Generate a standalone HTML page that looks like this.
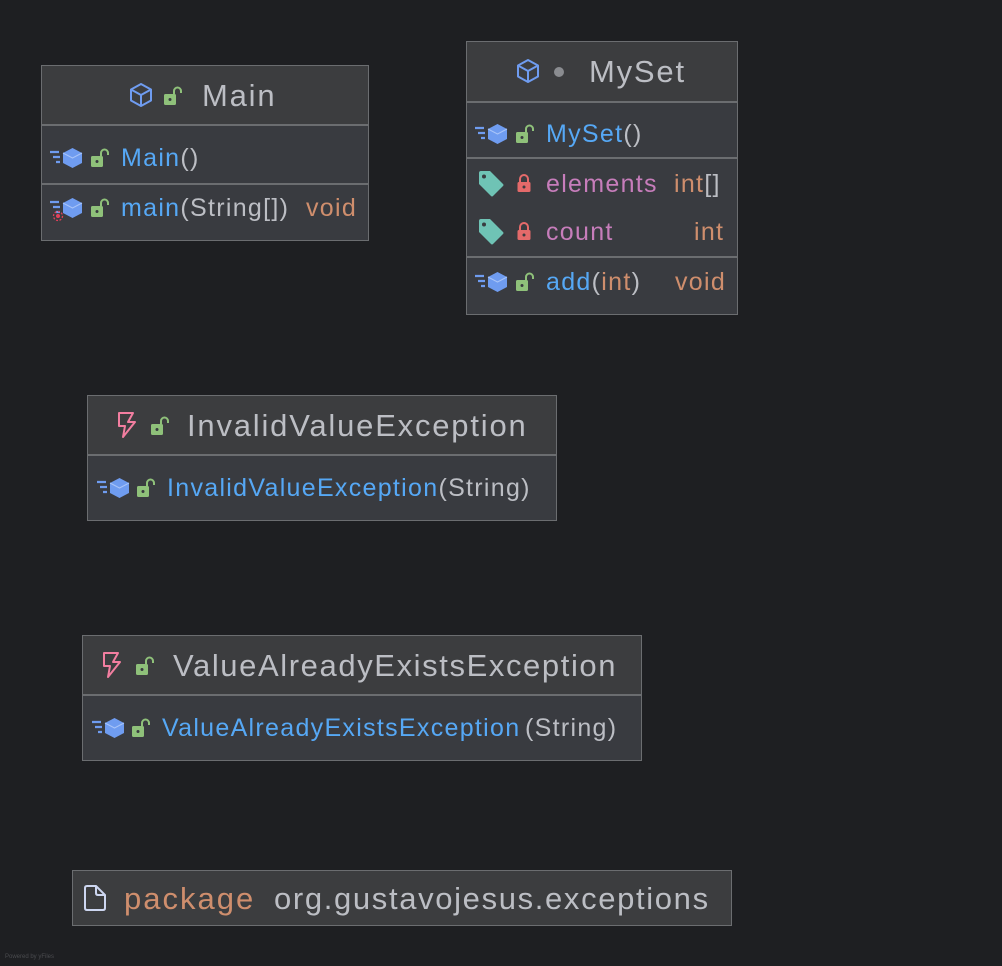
<!DOCTYPE html>
<html><head><meta charset="utf-8">
<style>
body{margin:0;background:#1e1f22;width:1002px;height:966px;overflow:hidden;position:relative;font-family:"Liberation Sans",sans-serif}
.box{position:absolute;border:1px solid #6b6d70;background:#393b40;box-sizing:border-box}
.hd{position:absolute;left:0;right:0;top:0;background:#3c3d3f;border-bottom:2px solid #6b6d70;box-sizing:border-box}
.sep{position:absolute;left:0;right:0;height:2px;background:#6b6d70}
.t{position:absolute;white-space:nowrap;line-height:30px;height:30px}
.h{font-size:31px;color:#bcbec4;letter-spacing:1.8px}
.r{font-size:25px;color:#bcbec4;letter-spacing:1.3px}
.m{color:#56a8f5}.o{color:#cf8e6d}.f{color:#c77dbb}
svg.i{position:absolute}
</style></head><body>
<svg width="0" height="0" style="position:absolute">
<defs>
<symbol id="cube" viewBox="0 0 26 26"><path d="M13 2 L23 7.5 V18.5 L13 24 L3 18.5 V7.5 Z M3 7.5 L13 13 L23 7.5 M13 13 V24" fill="none" stroke="#6f9cf0" stroke-width="2" stroke-linejoin="round"/></symbol>
<symbol id="lo" viewBox="0 0 20 20"><path d="M11 8 V5 A3.5 3.5 0 0 1 18 5 V7" fill="none" stroke="#8fc17a" stroke-width="2"/><rect x="1" y="8" width="12" height="11" rx="1.5" fill="#8fc17a"/><circle cx="7" cy="13.5" r="1.5" fill="#393b40"/></symbol>
<symbol id="lc" viewBox="0 0 20 20"><path d="M6 9 V6 A4 4 0 0 1 14 6 V9" fill="none" stroke="#e46a6a" stroke-width="2"/><rect x="3.5" y="9" width="13" height="10" rx="1.5" fill="#e46a6a"/><circle cx="10" cy="14" r="1.5" fill="#393b40"/></symbol>
<symbol id="mt" viewBox="0 0 34 22"><path d="M0 5 H9 M3 10 H10 M6 15 H10" stroke="#6f9cf0" stroke-width="2.2"/><path d="M22.5 1 L32 6 V16 L22.5 21 L13 16 V6 Z" fill="#6f9cf0"/><path d="M13 6 L22.5 11 L32 6" fill="none" stroke="#a8c4f8" stroke-width="1"/></symbol>
<symbol id="tag" viewBox="0 0 28 28"><path d="M2 3 Q2 1 4 1 H13 L26 14 Q27 15 26 16 L16 26 Q15 27 14 26 L2 14 Z" fill="#6fc3b5"/><circle cx="7" cy="6.5" r="2" fill="#393b40"/></symbol>
<symbol id="bolt" viewBox="0 0 20 28"><path d="M2 2 H16 L11 11 H18 L6 26 L8 15 H2 Z" fill="none" stroke="#f27ea0" stroke-width="2" stroke-linejoin="round"/></symbol>
<symbol id="file" viewBox="0 0 24 28"><path d="M4 2 H13 L22 11 V24 Q22 26 20 26 H4 Q2 26 2 24 V4 Q2 2 4 2 Z M13 2 V9 Q13 11 15 11 H22" fill="none" stroke="#cdd6f0" stroke-width="2" stroke-linejoin="round"/></symbol>
</defs></svg>

<!-- Main -->
<div class="box" style="left:41px;top:65px;width:328px;height:176px">
 <div class="hd" style="height:60px"></div>
 <div class="sep" style="top:117px"></div>
</div>
<svg class="i" style="left:128px;top:82px" width="26" height="26"><use href="#cube"/></svg>
<svg class="i" style="left:163px;top:86px" width="20" height="20"><use href="#lo"/></svg>
<div class="t h" style="left:202px;top:81px">Main</div>
<svg class="i" style="left:50px;top:147px" width="34" height="22"><use href="#mt"/></svg>
<svg class="i" style="left:90px;top:148px" width="20" height="20"><use href="#lo"/></svg>
<div class="t r" style="left:121px;top:143px"><span class="m">Main</span>()</div>
<svg class="i" style="left:50px;top:197px" width="34" height="22"><use href="#mt"/></svg>
<svg class="i" style="left:52px;top:210px" width="12" height="12"><circle cx="6" cy="6" r="4.5" fill="none" stroke="#e0405a" stroke-width="1.3" stroke-dasharray="2 1.5"/><circle cx="6" cy="6" r="2" fill="#e0405a"/></svg>
<svg class="i" style="left:90px;top:198px" width="20" height="20"><use href="#lo"/></svg>
<div class="t r" style="left:121px;top:193px"><span class="m">main</span>(String[])</div>
<div class="t r o" style="left:306px;top:193px">void</div>

<!-- MySet -->
<div class="box" style="left:466px;top:41px;width:272px;height:274px">
 <div class="hd" style="height:61px"></div>
 <div class="sep" style="top:115px"></div>
 <div class="sep" style="top:214px"></div>
</div>
<svg class="i" style="left:515px;top:58px" width="26" height="26"><use href="#cube"/></svg>
<svg class="i" style="left:553px;top:66px" width="12" height="12"><circle cx="6" cy="6" r="5" fill="#8a8c90"/></svg>
<div class="t h" style="left:589px;top:57px">MySet</div>
<svg class="i" style="left:475px;top:123px" width="34" height="22"><use href="#mt"/></svg>
<svg class="i" style="left:515px;top:124px" width="20" height="20"><use href="#lo"/></svg>
<div class="t r" style="left:546px;top:119px"><span class="m">MySet</span>()</div>
<svg class="i" style="left:477px;top:170px" width="28" height="28"><use href="#tag"/></svg>
<svg class="i" style="left:514px;top:173px" width="20" height="20"><use href="#lc"/></svg>
<div class="t r f" style="left:546px;top:169px">elements</div>
<div class="t r o" style="left:674px;top:169px">int<span style="color:#bcbec4">[]</span></div>
<svg class="i" style="left:477px;top:218px" width="28" height="28"><use href="#tag"/></svg>
<svg class="i" style="left:514px;top:221px" width="20" height="20"><use href="#lc"/></svg>
<div class="t r f" style="left:546px;top:217px">count</div>
<div class="t r o" style="left:694px;top:217px">int</div>
<svg class="i" style="left:475px;top:271px" width="34" height="22"><use href="#mt"/></svg>
<svg class="i" style="left:515px;top:272px" width="20" height="20"><use href="#lo"/></svg>
<div class="t r" style="left:546px;top:267px"><span class="m">add</span>(<span class="o">int</span>)</div>
<div class="t r o" style="left:675px;top:267px">void</div>

<!-- InvalidValueException -->
<div class="box" style="left:87px;top:395px;width:470px;height:126px">
 <div class="hd" style="height:60px"></div>
</div>
<svg class="i" style="left:117px;top:411px" width="20" height="28"><use href="#bolt"/></svg>
<svg class="i" style="left:150px;top:416px" width="20" height="20"><use href="#lo"/></svg>
<div class="t h" style="left:187px;top:411px">InvalidValueException</div>
<svg class="i" style="left:97px;top:477px" width="34" height="22"><use href="#mt"/></svg>
<svg class="i" style="left:136px;top:478px" width="20" height="20"><use href="#lo"/></svg>
<div class="t r" style="left:167px;top:473px"><span class="m">InvalidValueException</span>(String)</div>

<!-- ValueAlreadyExistsException -->
<div class="box" style="left:82px;top:635px;width:560px;height:126px">
 <div class="hd" style="height:60px"></div>
</div>
<svg class="i" style="left:102px;top:651px" width="20" height="28"><use href="#bolt"/></svg>
<svg class="i" style="left:135px;top:656px" width="20" height="20"><use href="#lo"/></svg>
<div class="t h" style="left:173px;top:651px;letter-spacing:1.6px">ValueAlreadyExistsException</div>
<svg class="i" style="left:92px;top:717px" width="34" height="22"><use href="#mt"/></svg>
<svg class="i" style="left:131px;top:718px" width="20" height="20"><use href="#lo"/></svg>
<div class="t r m" style="left:162px;top:713px">ValueAlreadyExistsException</div>
<div class="t r" style="left:525px;top:713px">(String)</div>

<!-- package -->
<div class="box" style="left:72px;top:870px;width:660px;height:56px;background:#3c3d3f"></div>
<svg class="i" style="left:83px;top:884px" width="24" height="28"><use href="#file"/></svg>
<div class="t h" style="left:124px;top:884px;letter-spacing:2px"><span class="o">package</span></div>
<div class="t h" style="left:274px;top:884px;letter-spacing:1.65px">org.gustavojesus.exceptions</div>
<div style="position:absolute;left:5px;top:954px;font-size:6px;color:#4a4b4f">Powered by yFiles</div>
</body></html>
